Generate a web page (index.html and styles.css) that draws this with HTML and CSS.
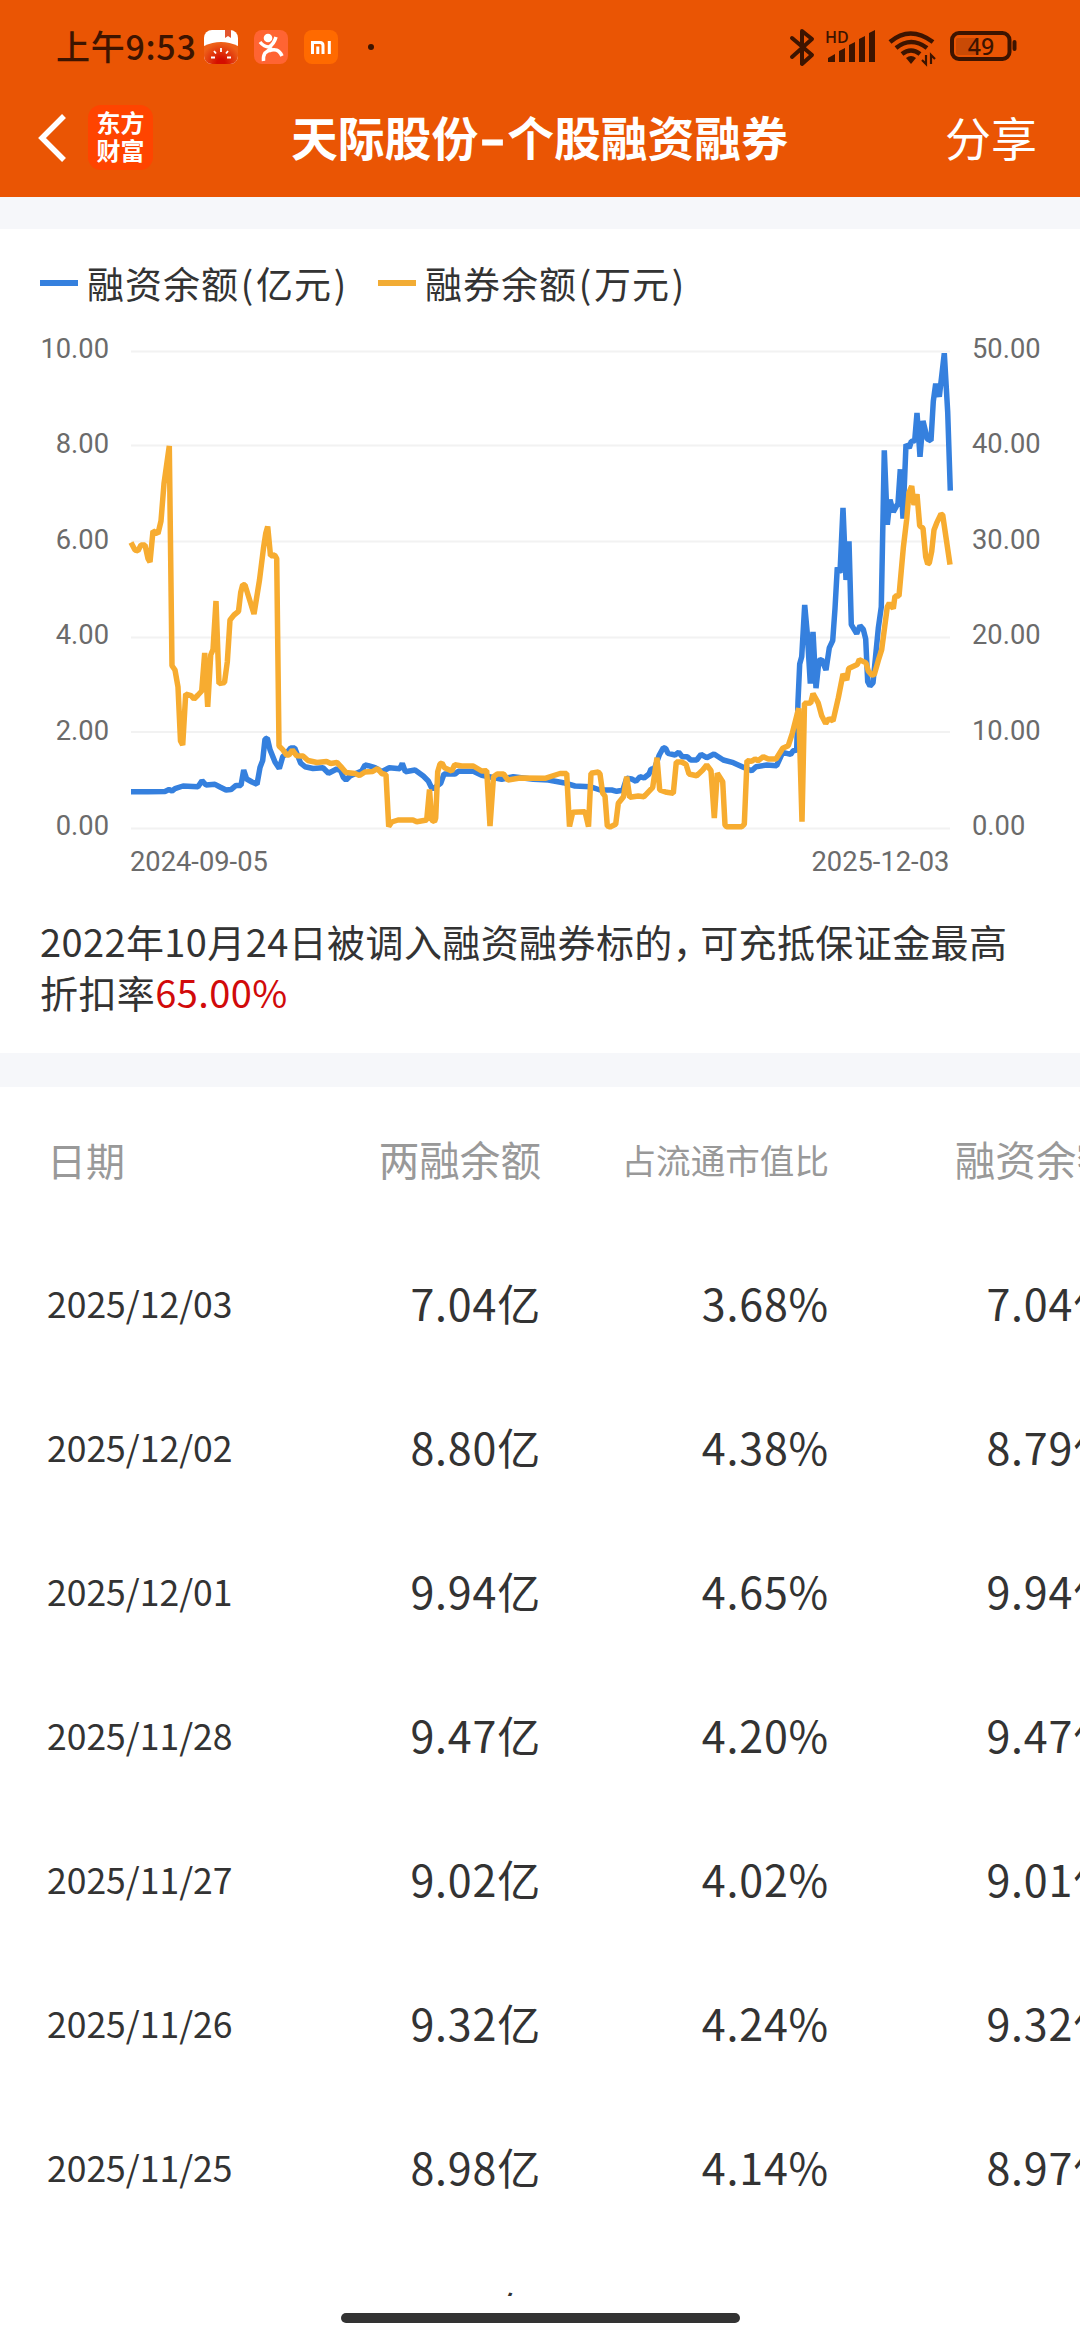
FILE: index.html
```html
<!DOCTYPE html>
<html lang="zh-CN">
<head>
  <meta charset="utf-8">
  <title>天际股份-个股融资融券</title>
  <link rel="stylesheet" href="styles.css">
</head>
<body>

<header class="header">
  <div class="statusBar">
    <span class="clock">上午9:53</span>
    <svg class="appIcon" viewBox="0 0 34 34">
      <defs>
        <radialGradient id="tomato" cx="17" cy="33" r="20" gradientUnits="userSpaceOnUse">
          <stop offset="0.2" stop-color="#d40e00"/>
          <stop offset="1" stop-color="#ee6018"/>
        </radialGradient>
        <clipPath id="rounded"><rect width="34" height="34" rx="8"/></clipPath>
      </defs>
      <g clip-path="url(#rounded)">
        <rect width="34" height="34" fill="#fff"/>
        <path d="M0 16Q17 8 34 16V34H0z" fill="url(#tomato)"/>
        <path d="M21 0h6v8l-3-2-3 2z" fill="#e2552e"/>
        <path d="M17 18v4M10 21l2 2.500M24 21l-2 2.500M7 27.500h4M23 27.500h4" stroke="#fff" stroke-width="1.800"/>
      </g>
    </svg>
    <svg class="appIcon" viewBox="0 0 34 34">
      <rect width="34" height="34" rx="8" fill="#ff6433"/>
      <circle cx="14" cy="8" r="4.300" fill="#fff"/>
      <path d="M6 12Q10 17 15 17Q20 14 22 7M17 17Q15 21 11 23Q9 26 9.500 31M15 21Q24 17 28 26" fill="none" stroke="#fff" stroke-width="3.500"/>
    </svg>
    <svg class="appIcon" viewBox="0 0 34 34">
      <rect width="34" height="34" rx="8" fill="#ff6a00"/>
      <path d="M8.500 24V12.500H16Q19 12.500 19 15.500V24M13.800 16.500V24M25.300 11V24" fill="none" stroke="#fff" stroke-width="3"/>
    </svg>
    <span class="moreDot"></span>

    <svg class="statusIcons" viewBox="0 0 230 40">
      <g fill="none" stroke="#3d1400">
        <path d="M3 11L23 28L13 37V4L23 12L3 30" stroke-width="4" stroke-linejoin="round" stroke-linecap="round"/>
        <path d="M101 15Q121 -2 144 15M107 21Q122 9 138 21M113 27Q122 20 131 27" stroke-width="4.500"/>
        <rect x="163" y="6" width="57.500" height="26" rx="7" stroke-width="4"/>
        <path d="M225.500 15v7" stroke-width="4" stroke-linecap="round"/>
        <path d="M137 28v9l-4-4M142 37v-9l4 4" stroke-width="2.200"/>
      </g>
      <g fill="#3d1400">
        <path d="M39 35v-4l7-4v8zM50 35V24l6-3v14zM60 35V18l6-3v20zM70 35V12l6-3v26zM80 35V6l6-3v32z"/>
        <path d="M117 31q5-4 10 0l-5 6z"/>
        <rect x="167" y="11" width="20" height="17" rx="2" fill="#c94a05"/>
        <text x="36" y="15.500" class="hd">HD</text>
        <text x="192" y="28" text-anchor="middle" class="battery">49</text>
      </g>
    </svg>
  </div>

  <div class="navBar">
    <svg class="back" viewBox="0 0 30 50"><path d="M26 3L4 25L26 47" fill="none" stroke="#fff" stroke-width="5.500"/></svg>
    <div class="logo">东方<br>财富</div>
    <h1 class="title">天际股份<span class="dash">-</span>个股融资融券</h1>
    <span class="share">分享</span>
  </div>
</header>

<section class="chartCard">
  <div class="legend">
    <span class="legendItem balance">融资余额<i>(</i>亿元<i>)</i></span>
    <span class="legendItem lending">融券余额<i>(</i>万元<i>)</i></span>
  </div>

  <svg class="chart" viewBox="0 330 1080 560">
    <path class="grid" d="M131 351.500H950M131 445.500H950M131 541.500H950M131 637.500H950M131 732H950M131 828.500H950"/>

    <g class="axis axisLeft">
      <text x="109" y="358">10.00</text>
      <text x="109" y="453">8.00</text>
      <text x="109" y="549">6.00</text>
      <text x="109" y="644">4.00</text>
      <text x="109" y="739.500">2.00</text>
      <text x="109" y="835">0.00</text>
    </g>
    <g class="axis">
      <text x="972" y="358">50.00</text>
      <text x="972" y="453">40.00</text>
      <text x="972" y="549">30.00</text>
      <text x="972" y="644">20.00</text>
      <text x="972" y="739.500">10.00</text>
      <text x="972" y="835">0.00</text>
      <text x="130" y="870.500">2024-09-05</text>
      <text x="811.500" y="870.500">2025-12-03</text>
    </g>

    <polyline class="line lineBalance" points="131,791.8 148,791.8 165,791.4 169,789.6 172,791 175,788.6 183,786 198,786.8 202,780.7 206,785 215,784.3 220,787 226,790 231,789.6 236,785.4 241,785.4 243.7,770 246.700,779 252,782 257,784.3 260,767.5 262.7,760.4 265,739 267.3,738.2 270,749.6 275,762 279.3,768.6 282.7,756.8 286.7,753 290.7,748 294.7,748 300.7,763.2
      305,766.7 313,768.5 323,767.7 328.5,773.3 336.7,769 340.7,770.7 343.3,777.3 346,780 350,776 361.7,771 365,765 368.3,765.7 375,767.7 381.7,771.7 389.3,767.7 400,768.7 402.3,763.3 405.3,771.7 415,770 423.3,776 428.3,781 431.3,787.3 433.3,788.7 440.7,783.3 444,774 455,774 458.3,771.3 473.3,771.3 481.7,775.3 491.7,777.3 501.7,779.3 513.3,776.7 533.3,779.3 548.3,780 563.3,782.7 575,786 590,786.7 600,790 611.7,790 616.7,791.3 622.7,790.3 626.7,778.3
      631.7,779 636,781.3 640,776.7 644,778 649,774 651,769 654.3,769 659.3,755 663.3,747.7 665.7,748.3 668,753.3 675,755 678.7,752.3 682.3,756.7 687.3,756.7 690.7,760 696.7,760 701,754.3 706.7,757.7 714,754 723.3,760 733.3,762.7 743.3,767.3 751.7,770.7 756,766.7 766.7,765 776.7,765.7 782.7,752.3 790.7,754.3 793.3,750.7 796.7,750
      798,701.4 799.7,664 801.7,656.8 804.7,605 807.3,633.6 810.3,683.6 813,631.8 816,688.2 819,660.4 821.7,659.6 826,670 829.3,647.9 832.7,640.7 835,608.6 837.3,567.5 840,572.9 843,507.9 846,580 849,541.4 851.3,624.6 856.7,633.6 860,625.7 863.3,629.3 865.7,639 867.7,681.8 870,686 873,682.9 878.3,628.2 881.3,606.8 884.3,450.4 887.3,524.6 890,499.6 893.3,512 898,503.2 900.3,469.3 903,518.6 906,444.3 909.3,447.9 911.3,441.4 914.7,440.7 917,412.9 920,456.8 923,421 927.3,439 931,440.7 933.3,401.4 935.7,383.6 939.3,396.8 944.3,353.2 947.7,412 950.3,490.7"/>
    <polyline class="line lineLending" points="131,542.5 135,550 138,550.7 141,545 145,545 148,558.6 150,562 153,531 158,533.6 161,521 164,483.6 169.3,446 172,665.7 175,670 178,687 180.5,741 182.7,745 185.7,694 191,695.7 194,699 198,695 201.7,691 204.7,653 207.7,706.8 210.7,655 213,649.6 216,601 219,683.6 224.5,682.5 227.3,662 230,620 234,615 238.5,611.4 240.7,592.5 242.7,584.6 245,585 254,614 259.5,580 263.5,548 265.7,533.6 267.7,526.5 270.5,555.7 274.7,555 276.7,558.6 279,746 282.7,749.6 286.7,755 289,755 292.3,750 296.7,755.7
      303,756 308,760.5 317,762.5 326.5,761.5 330.7,763.5 337,762.5 341.7,767.5 346,772.5 355,773.5 359.5,775.5 365,772 372.7,771.5 377.5,768.5 381.7,773.5 386,774.7 388.7,826.5 391.7,822 398,820 413,820 416.7,821.7 426.7,820 429.5,789.5 431.7,820 434.5,821.5 435.7,818 437.7,771.7 440,764 442,763 444.5,767.7 451.7,771 454.7,764.7 461.7,766 473.3,766 481.7,771 486.7,770.7 490,826 493.5,776.7 497.3,774 503.5,774 508,780 520,778 545,778.3 560,773.5 566.7,773.5 569.5,826.5 572.7,812.3 585,811.7 588.5,826.5 591,773.3 598.3,772 600,774 602.7,793.3 605,796 607.3,826 610,827 615.7,824.3 618.3,803.3 623.5,796.7 626.7,776.7 629.7,797.3
      638.3,796 644,796.7 652.7,787.3 657,757.7 659.7,790 666.7,792.3 673.3,793.3 676.3,762 681.7,762 686,764.3 689,774 696.7,775.7 702.7,770 706.7,765 711,770.7 714.3,818 717.3,773.3 722.7,781.7 725,825 726.7,826.7 741.7,826.7 744.3,824.3 747,760.7 751.7,761.3 755,759 758,760.7 763.3,756.7 768.3,759 776,759 782.7,748.3 788.3,745.7 792.3,733.3 798.7,708.3 802,821.7 804.5,703.2
      810.7,703 813,693.6 818.3,703.2 821.7,715.7 825.7,723.6 829,718.6 833,721 838.3,697.9 843,674 846.7,680 848.7,668.6 857.3,664.6 859.3,659.6 866,662.9 868.3,671 871.7,675 874.3,674.6 878.3,660.4 881.7,649.6 887.3,606.8 889.3,603.2 893.3,608.6 895,596 899,596 903.3,547.9 906.7,519.3 909,492.5 911.7,486 914,505 917,494.3 919.7,525.7 923,528.2 925.7,556.8 927.7,564 929.3,562.9 931.7,551.4 934,530 936.7,522.9 941,514 942.7,515 950,564.6"/>
  </svg>

  <p class="note">2022年10月24日被调入融资融券标的<span class="comma">，</span>可充抵保证金最高折扣率<span class="rate">65.00%</span></p>
</section>

<section class="tableCard">
  <table class="grid4">
    <tr><th>日期</th><th>两融余额</th><th class="small">占流通市值比</th><th>融资余额</th></tr>
    <tr><td>2025/12/03</td><td>7.04亿</td><td>3.68%</td><td>7.04亿</td></tr>
    <tr><td>2025/12/02</td><td>8.80亿</td><td>4.38%</td><td>8.79亿</td></tr>
    <tr><td>2025/12/01</td><td>9.94亿</td><td>4.65%</td><td>9.94亿</td></tr>
    <tr><td>2025/11/28</td><td>9.47亿</td><td>4.20%</td><td>9.47亿</td></tr>
    <tr><td>2025/11/27</td><td>9.02亿</td><td>4.02%</td><td>9.01亿</td></tr>
    <tr><td>2025/11/26</td><td>9.32亿</td><td>4.24%</td><td>9.32亿</td></tr>
    <tr><td>2025/11/25</td><td>8.98亿</td><td>4.14%</td><td>8.97亿</td></tr>
    <tr><td></td><td>亿</td><td></td><td></td></tr>
  </table>
</section>

<footer class="homeBar"><span class="homeIndicator"></span></footer>

</body>
</html>
```

FILE: styles.css
```css
* {box-sizing:border-box;}
body {margin:0;width:1080px;height:2340px;overflow:hidden;background:#fff;color:#333;font-family:"Noto Sans CJK SC",sans-serif;}

/* header */
.header {height:197px;background:#ea5504;color:#fff;}
.statusBar {display:flex;align-items:center;height:94px;padding-left:56px;}
.clock {width:148px;font-size:34px;font-weight:500;line-height:92px;height:94px;color:#3d1400;white-space:nowrap;letter-spacing:0.7px;}
.appIcon {width:34px;height:34px;margin-right:16px;}
.moreDot {width:6px;height:6px;margin-left:14px;border-radius:3px;background:#3d1400;}
.statusIcons {width:230px;height:40px;margin-left:415px;}
.hd {font-family:"Open Sans",sans-serif;font-weight:600;font-size:16px;}
.battery {font-family:"Noto Sans",sans-serif;font-weight:500;font-size:23px;}

.navBar {display:flex;align-items:center;height:87px;padding:0 43px 0 38px;}
.back {width:30px;height:50px;}
.logo {width:65px;height:65px;margin-left:20px;padding-top:3px;border-radius:13px;background:#ff4400;font-weight:700;font-size:24px;line-height:28px;text-align:center;}
.title {flex:1;margin:0 0 0 138px;font-size:46.800px;font-weight:700;line-height:84px;height:87px;white-space:nowrap;}
.dash {display:inline-block;width:29px;text-align:center;transform:scaleX(1.5);-webkit-text-stroke:1px #fff;}
.share {font-size:46px;line-height:84px;height:87px;}

/* chart */
.chartCard {height:856px;padding-top:54px;border-top:32px solid #f6f7fa;}
.legend {display:flex;height:0;padding-left:40px;}
.legendItem {display:flex;align-items:center;height:0;margin-right:29px;font-size:37px;letter-spacing:1px;white-space:nowrap;}
.legendItem i {width:17px;font-style:normal;text-align:center;}
.legendItem::before {content:"";width:38px;height:6px;margin-right:9px;}
.balance::before {background:#3580de;}
.lending::before {background:#f2ac34;}
.chart {display:block;width:1080px;height:560px;margin-top:47px;}
.grid {stroke:#f2f2f2;stroke-width:2;}
.axis {fill:#6b6b6b;font-family:Roboto,sans-serif;font-size:27.300px;}
.axisLeft {text-anchor:end;}
.line {fill:none;stroke-width:5.500;stroke-linejoin:bevel;}
.lineBalance {stroke:#3580de;}
.lineLending {stroke:#f7ac30;}
.note {margin:25px 60px 0 40px;font-size:38px;line-height:51px;letter-spacing:0.4px;}
.comma {margin-right:-11px;}
.rate {color:#d10a0a;}

/* table */
.tableCard {height:1243px;border-top:34px solid #f6f7fa;overflow:hidden;}
.grid4 {width:1117px;table-layout:fixed;border-collapse:collapse;}
.grid4 th, .grid4 td {width:288px;height:144px;padding:0 0 4px;text-align:right;white-space:nowrap;font-weight:400;}
.grid4 th {height:145px;padding-bottom:2px;font-size:40.600px;color:#999;}
.grid4 th.small {font-size:34.600px;}
.grid4 td {font-size:43px;letter-spacing:0.8px;}
.grid4 th:first-child, .grid4 td:first-child {width:253px;padding-left:47px;text-align:left;}
.grid4 th:first-child {font-size:39px;}
.grid4 td:first-child {font-size:35.500px;letter-spacing:0;}

.homeBar {display:flex;justify-content:center;height:44px;padding-top:17px;background:#fff;}
.homeIndicator {width:399px;height:10px;border-radius:5px;background:#333;}
```
